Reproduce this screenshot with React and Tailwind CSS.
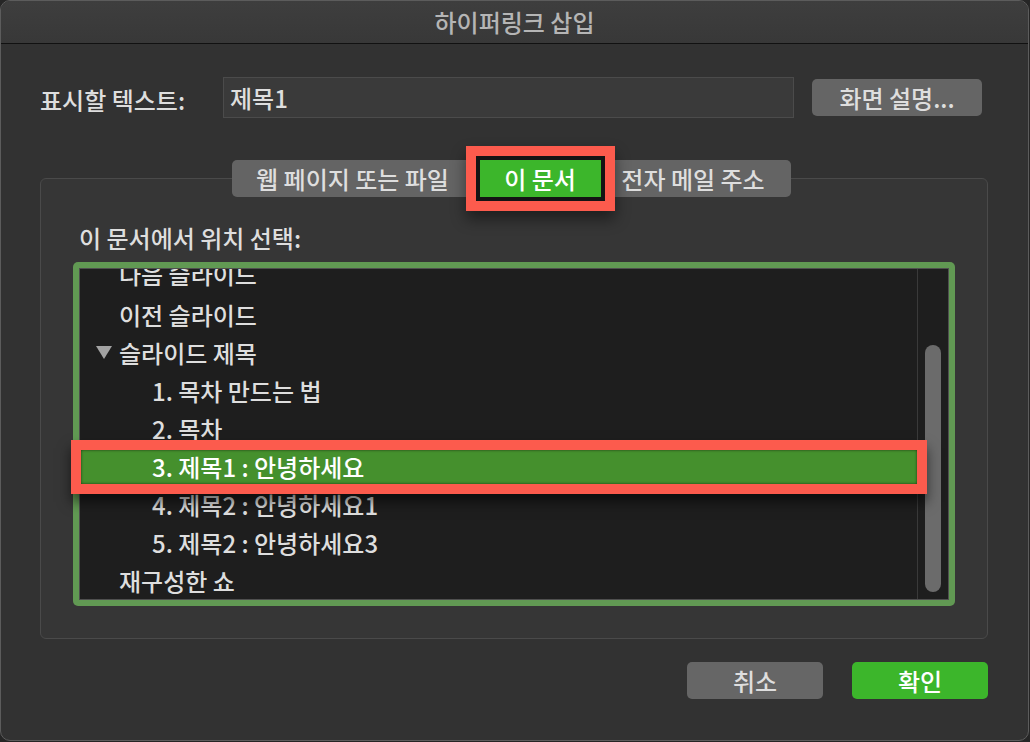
import React from "react";

const FONT = { fontFamily: '"Noto Sans CJK KR", "Noto Sans", sans-serif' };

function Triangle() {
    return (
        <svg width="16" height="14" viewBox="0 0 16 14" className="shrink-0">
            <polygon points="0,0 16,0 8,13" fill="#a3a3a3" />
        </svg>
    );
}

const rows = [
    { label: "이전 슬라이드", indent: "pl-[39px]" },
    { label: "슬라이드 제목", indent: "pl-[16px]", arrow: true },
    { label: "1. 목차 만드는 법", indent: "pl-[72px]" },
    { label: "2. 목차", indent: "pl-[72px]" },
    { label: "3. 제목1 : 안녕하세요", indent: "pl-[71px]", selected: true },
    { label: "4. 제목2 : 안녕하세요1", indent: "pl-[72px]" },
    { label: "5. 제목2 : 안녕하세요3", indent: "pl-[72px]" },
    { label: "재구성한 쇼", indent: "pl-[39px]" },
];

export default function App() {
    return (
        <div className="w-[1030px] h-[742px] bg-[#262626] text-[#dedede] font-medium" style={FONT}>
            <div className="w-[1029px] h-[741px] rounded-[10px] border border-[#5c5c5c] bg-[#323232] overflow-hidden flex flex-col">
                {/* Title bar */}
                <div className="h-[43px] shrink-0 flex items-center justify-center bg-gradient-to-b from-[#3e3e3e] to-[#383838] border-b border-[#111]">
                    <span className="text-[24px] text-[#b5b5b5] leading-none">하이퍼링크 삽입</span>
                </div>

                <div className="flex flex-col pl-[39px]">
                    {/* Display text row */}
                    <div className="mt-[33px] h-[41px] flex items-center">
                        <span className="w-[183px] text-[24px] leading-none pt-[4px]">표시할 텍스트:</span>
                        <div className="w-[571px] h-[41px] bg-[#3a3a3a] border border-[#4b4b4b] flex items-center px-[6px] text-[24px]">
                            제목1
                        </div>
                        <button className="ml-[18px] w-[170px] h-[37px] rounded-[5px] bg-[#656565] text-[24px] flex items-center justify-center">
                            화면 설명...
                        </button>
                    </div>

                    {/* Group box */}
                    <div className="mt-[60px] w-[948px] h-[461px] rounded-[6px] border border-[#4a4a4a] bg-[#363636] flex flex-col">
                        {/* Tabs */}
                        <div className="-mt-[19px] flex justify-center pr-[6px] h-[37px] text-[24px]">
                            <div className="w-[242px] h-[37px] rounded-l-[5px] bg-[#646464] flex items-center justify-center">
                                웹 페이지 또는 파일
                            </div>
                            <div className="ml-[6px] w-[121px] h-[37px] bg-[#3cb62b] text-white flex items-center justify-center relative z-10 shadow-[0_0_0_4px_#141414,0_0_0_14px_#fc5b4d,0_8px_14px_14px_rgba(0,0,0,0.45)]">
                                이 문서
                            </div>
                            <div className="ml-[5px] w-[185px] h-[37px] rounded-r-[5px] bg-[#646464] flex items-center justify-center pr-[10px]">
                                전자 메일 주소
                            </div>
                        </div>

                        <div className="mt-[29px] ml-[38px] text-[24px] leading-[24px]">이 문서에서 위치 선택:</div>

                        {/* List */}
                        <div className="mt-[12px] ml-[32px] w-[882px] h-[344px] rounded-[5px] bg-[#619953] p-[6px]">
                            <div className="w-full h-full bg-[#1e1e1e] border border-[#4f4f4f] flex">
                                <div className="flex-1 flex flex-col text-[24px]">
                                    <div className="h-[27px] overflow-hidden shrink-0">
                                        <div className="-mt-[14px] h-[38px] flex items-center pl-[39px]">다음 슬라이드</div>
                                    </div>
                                    {rows.map((r) => (
                                        <div key={r.label} className="h-[38px] shrink-0 py-[2px]">
                                            <div
                                                className={
                                                    r.selected
                                                        ? "h-[34px] ml-[1px] flex items-center bg-[#45902d] text-white relative z-10 shadow-[inset_0_0_3px_rgba(0,0,0,0.6),0_0_0_10px_#fc5b4d,0_8px_12px_10px_rgba(0,0,0,0.55)] " + r.indent
                                                        : "h-[34px] flex items-center gap-[7px] " + r.indent
                                                }
                                            >
                                                {r.arrow && <Triangle />}
                                                {r.label}
                                            </div>
                                        </div>
                                    ))}
                                </div>
                                {/* Scrollbar */}
                                <div className="w-[31px] shrink-0 border-l border-[#3a3a3a] pt-[76px] pb-[7px] pl-[7px]">
                                    <div className="w-[16px] h-full rounded-full bg-[#6b6b6b]" />
                                </div>
                            </div>
                        </div>
                    </div>

                    {/* Bottom buttons */}
                    <div className="mt-[23px] flex justify-end pr-[40px] gap-[29px] text-[24px]">
                        <button className="w-[136px] h-[37px] rounded-[5px] bg-[#666666] flex items-center justify-center">
                            취소
                        </button>
                        <button className="w-[136px] h-[37px] rounded-[5px] bg-[#3cb62b] text-white flex items-center justify-center">
                            확인
                        </button>
                    </div>
                </div>
            </div>
        </div>
    );
}
